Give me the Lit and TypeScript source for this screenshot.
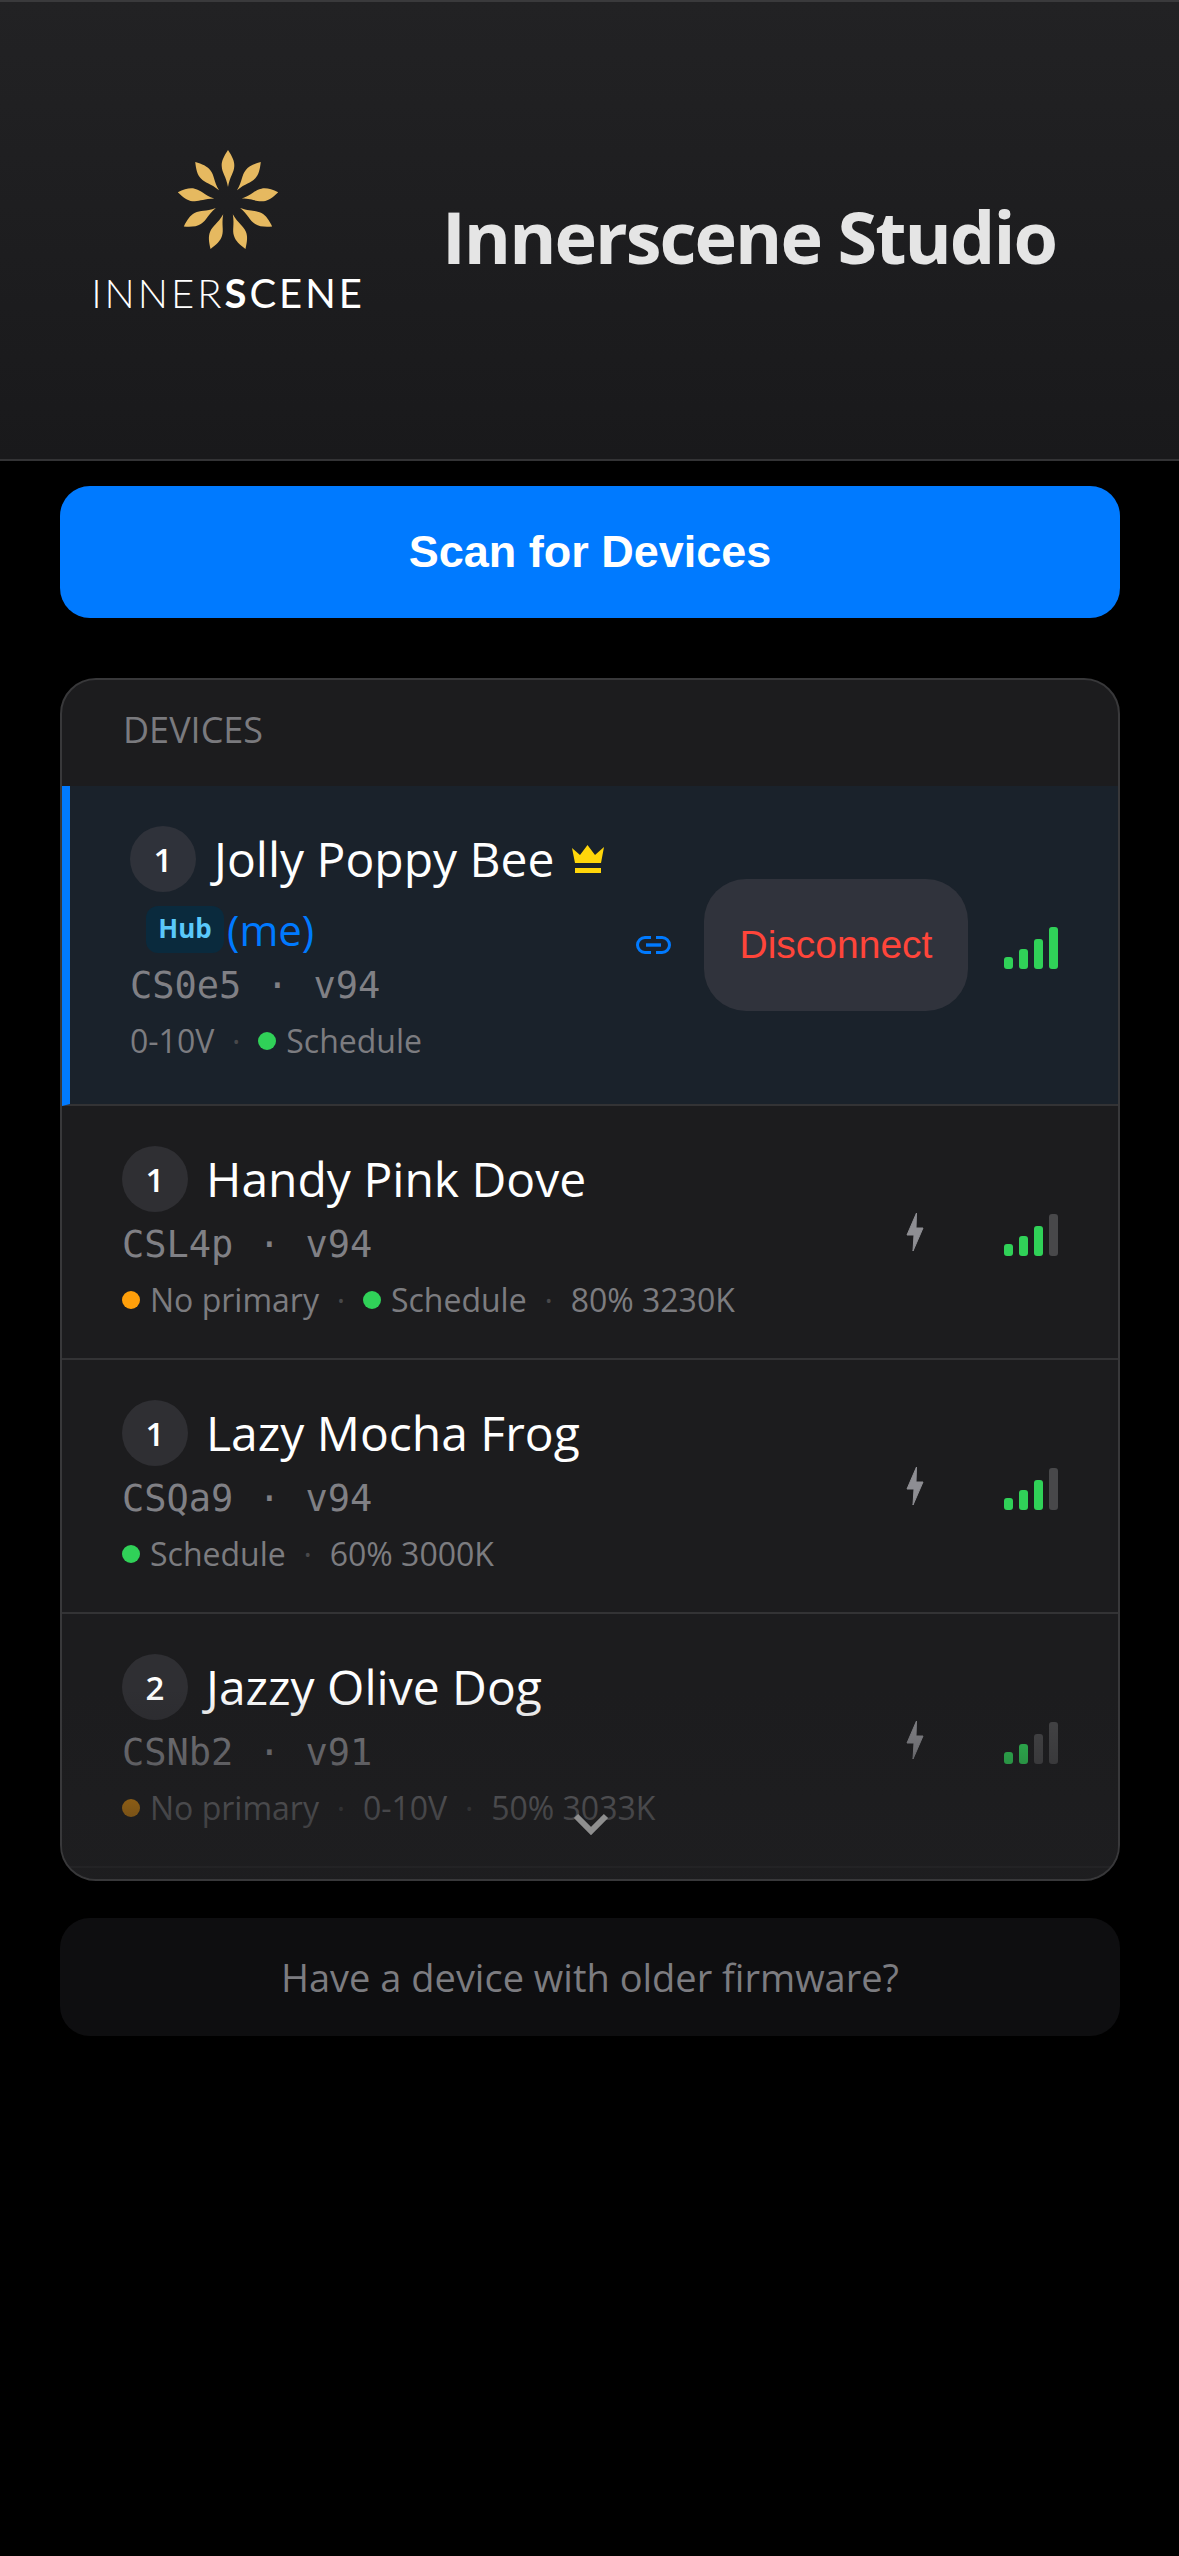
import { LitElement, css, html, svg } from "lit";
import { customElement } from "lit/decorators.js";

type Meta = { dot?: string; text: string };
type Device = {
  group: number;
  name: string;
  code: string;
  version: string;
  meta: Meta[];
  level: number;
};

const GREEN = "#30d158";
const ORANGE = "#ff9f0a";

const devices: Device[] = [
  {
    group: 1,
    name: "Handy Pink Dove",
    code: "CSL4p",
    version: "v94",
    meta: [{ dot: ORANGE, text: "No primary" }, { dot: GREEN, text: "Schedule" }, { text: "80% 3230K" }],
    level: 3,
  },
  {
    group: 1,
    name: "Lazy Mocha Frog",
    code: "CSQa9",
    version: "v94",
    meta: [{ dot: GREEN, text: "Schedule" }, { text: "60% 3000K" }],
    level: 3,
  },
  {
    group: 2,
    name: "Jazzy Olive Dog",
    code: "CSNb2",
    version: "v91",
    meta: [{ dot: ORANGE, text: "No primary" }, { text: "0-10V" }, { text: "50% 3033K" }],
    level: 2,
  },
];

const petal = "M0 -51C4 -45 6.6 -40 6.3 -35C6 -28 2 -25 0 -14C-2 -25 -6 -28 -6.3 -35C-6.6 -40 -4 -45 0 -51Z";

const sun = html`<svg class="sun" width="104" height="104" viewBox="-52 -52 104 104">
  ${[0, 40, 80, 120, 160, 200, 240, 280, 320].map(
    (a) => svg`<path d=${petal} fill="#e6b960" transform="rotate(${a})"></path>`
  )}
</svg>`;

const crown = html`<svg class="crown" width="32" height="28" viewBox="0 0 32 28">
  <path d="M0 3L8 10L15.5 0L23 10L32 2L29 18H3Z" fill="#ffd60a"></path>
  <rect x="3" y="23" width="26" height="5" fill="#ffd60a"></rect>
</svg>`;

const link = html`<svg class="link" width="35" height="18" viewBox="0 0 35 18" fill="none">
  <path d="M15 1.5H9a7.5 7.5 0 0 0 0 15h6M20 1.5h6a7.5 7.5 0 0 1 0 15h-6" stroke="#007aff" stroke-width="3"></path>
  <path d="M10 9H25" stroke="#007aff" stroke-width="3.4"></path>
</svg>`;

const bolt = html`<svg class="bolt" width="18" height="40" viewBox="0 0 18 40">
  <path d="M10.5 1L1 23H8L7 39L17 16H10Z" fill="#8e8e93" stroke="#8e8e93" stroke-width="1" stroke-linejoin="round"></path>
</svg>`;

@customElement("app-root")
export class AppRoot extends LitElement {
  static styles = css`
    :host {
      display: block;
      min-height: 2556px;
      background: #000;
      font-family: "Open Sans", "Noto Sans", sans-serif;
    }

    .header {
      box-sizing: border-box;
      height: 461px;
      display: flex;
      align-items: center;
      gap: 70px;
      padding-left: 84px;
      border-top: 2px solid #3a3a3c;
      border-bottom: 2px solid #333335;
      background: linear-gradient(#222224, #19191b);
    }
    .logo {
      width: 288px;
      display: flex;
      flex-direction: column;
      align-items: center;
      gap: 20px;
    }
    .sun {
      display: block;
    }
    .wordmark {
      font-family: Lato, sans-serif;
      font-size: 40px;
      line-height: 40px;
      font-weight: 300;
      letter-spacing: 3px;
      color: #fff;
      white-space: nowrap;
    }
    .wordmark b {
      font-weight: 700;
    }
    .wordmark span {
      font-weight: 400;
    }
    .title {
      margin: 10px 0 0;
      font-size: 72px;
      line-height: 90px;
      font-weight: 700;
      color: #e5e5e5;
      letter-spacing: -2px;
      white-space: nowrap;
    }

    .main {
      padding: 25px 59px 0 60px;
    }
    .scan {
      height: 132px;
      border-radius: 30px;
      background: #007aff;
      color: #fff;
      display: flex;
      align-items: center;
      justify-content: center;
      font-family: "Liberation Sans", Arial, sans-serif;
      font-size: 45px;
      font-weight: 700;
    }

    .card {
      position: relative;
      box-sizing: border-box;
      height: 1203px;
      margin-top: 60px;
      border: 2px solid #38383a;
      border-radius: 36px;
      background: #1c1c1e;
      overflow: hidden;
    }
    .card-title {
      height: 106px;
      padding-left: 61px;
      font-size: 36px;
      line-height: 100px;
      color: #7a7a7e;
    }
    .row {
      box-sizing: border-box;
      height: 254px;
      padding: 40px 60px 0;
      display: flex;
      border-bottom: 2px solid #333335;
    }
    .row:last-child {
      border-bottom: none;
    }
    .row.active {
      height: 320px;
      padding-left: 60px;
      border-left: 8px solid #007aff;
      background: #1a222b;
    }
    .info {
      flex: 1;
      min-width: 0;
    }
    .name-line {
      display: flex;
      align-items: center;
      height: 66px;
      gap: 18px;
    }
    .num {
      width: 66px;
      height: 66px;
      border-radius: 50%;
      background: #2f2f33;
      color: #fff;
      display: flex;
      align-items: center;
      justify-content: center;
      font-size: 33px;
      font-weight: 600;
    }
    .active .num {
      background: #2f323a;
    }
    .name {
      font-size: 48px;
      line-height: 66px;
      color: #fff;
      white-space: nowrap;
    }
    .crown {
      margin-left: 0;
    }
    .sub-line {
      display: flex;
      align-items: center;
      height: 47px;
      margin: 14px 0 0 16px;
      gap: 3px;
    }
    .hub {
      box-sizing: border-box;
      width: 78px;
      height: 47px;
      border-radius: 12px;
      background: #0a2a3d;
      color: #5ac8fa;
      font-size: 26px;
      line-height: 44px;
      font-weight: 700;
      text-align: center;
    }
    .me {
      font-size: 42px;
      line-height: 47px;
      color: #007aff;
    }
    .ids {
      display: flex;
      height: 54px;
      margin-top: 6px;
      font-family: "DejaVu Sans Mono", monospace;
      font-size: 37px;
      line-height: 54px;
      font-weight: 500;
      color: #808085;
    }
    .ids i {
      width: 72px;
      text-align: center;
      font-style: normal;
    }
    .meta {
      display: flex;
      align-items: center;
      height: 48px;
      margin-top: 4px;
      font-size: 32px;
      line-height: 48px;
      color: #7c7c80;
      white-space: nowrap;
    }
    .meta .dot {
      width: 18px;
      height: 18px;
      margin-right: 10px;
      border-radius: 50%;
    }
    .meta .sep {
      width: 44px;
      text-align: center;
      color: #48484a;
    }
    .actions {
      display: flex;
      align-items: center;
      align-self: stretch;
      margin-top: -40px;
    }
    .link {
      margin-right: 33px;
    }
    .disconnect {
      width: 264px;
      height: 132px;
      border-radius: 42px;
      background: #30333c;
      color: #ff453a;
      display: flex;
      align-items: center;
      justify-content: center;
      font-family: "Liberation Sans", Arial, sans-serif;
      font-size: 39px;
      margin-right: 36px;
    }
    .bolt {
      margin-right: 80px;
    }
    .bars {
      display: flex;
      align-items: flex-end;
      gap: 6px;
      height: 42px;
      margin-top: 5px;
    }
    .bars span {
      width: 9px;
      border-radius: 3px;
      background: #48484a;
    }
    .bars span.on {
      background: #30d158;
    }
    .fade {
      position: absolute;
      left: 0;
      right: 0;
      bottom: 0;
      height: 190px;
      background: linear-gradient(rgba(28, 28, 30, 0), rgba(30, 30, 32, 0.62) 70%, rgba(30, 30, 32, 0.8));
      pointer-events: none;
    }
    .chevron {
      position: absolute;
      left: 511px;
      bottom: 44px;
    }

    .older {
      height: 118px;
      margin-top: 37px;
      border-radius: 30px;
      background: #0e0e10;
      color: #7c7c80;
      display: flex;
      align-items: center;
      justify-content: center;
      font-size: 38px;
    }
  `;

  renderBars(level: number) {
    const heights = [12, 20, 30, 42];
    return html`<div class="bars">
      ${heights.map((h, i) => html`<span class=${i < level ? "on" : ""} style="height:${h}px"></span>`)}
    </div>`;
  }

  renderIds(code: string, version: string) {
    return html`<div class="ids"><span>${code}</span><i>·</i><span>${version}</span></div>`;
  }

  renderMeta(items: Meta[]) {
    return html`<div class="meta">
      ${items.map(
        (m, i) => html`${i > 0 ? html`<span class="sep">·</span>` : ""}${m.dot
          ? html`<span class="dot" style="background:${m.dot}"></span>`
          : ""}<span>${m.text}</span>`
      )}
    </div>`;
  }

  render() {
    return html`
      <div class="header">
        <div class="logo">
          ${sun}
          <div class="wordmark">INNER<b>S</b><span>CENE</span></div>
        </div>
        <h1 class="title">Innerscene Studio</h1>
      </div>
      <div class="main">
        <div class="scan">Scan for Devices</div>
        <div class="card">
          <div class="card-title">DEVICES</div>
          <div class="row active">
            <div class="info">
              <div class="name-line">
                <span class="num">1</span><span class="name">Jolly Poppy Bee</span>${crown}
              </div>
              <div class="sub-line"><span class="hub">Hub</span><span class="me">(me)</span></div>
              ${this.renderIds("CS0e5", "v94")} ${this.renderMeta([{ text: "0-10V" }, { dot: GREEN, text: "Schedule" }])}
            </div>
            <div class="actions">
              ${link}
              <div class="disconnect">Disconnect</div>
              ${this.renderBars(4)}
            </div>
          </div>
          ${devices.map(
            (d) => html`<div class="row">
              <div class="info">
                <div class="name-line"><span class="num">${d.group}</span><span class="name">${d.name}</span></div>
                ${this.renderIds(d.code, d.version)} ${this.renderMeta(d.meta)}
              </div>
              <div class="actions">${bolt} ${this.renderBars(d.level)}</div>
            </div>`
          )}
          <div class="fade"></div>
          <svg class="chevron" width="36" height="22" viewBox="0 0 36 22" fill="none">
            <path d="M3 3L18 18L33 3" stroke="#8e8e8e" stroke-width="6"></path>
          </svg>
        </div>
        <div class="older">Have a device with older firmware?</div>
      </div>
    `;
  }
}
